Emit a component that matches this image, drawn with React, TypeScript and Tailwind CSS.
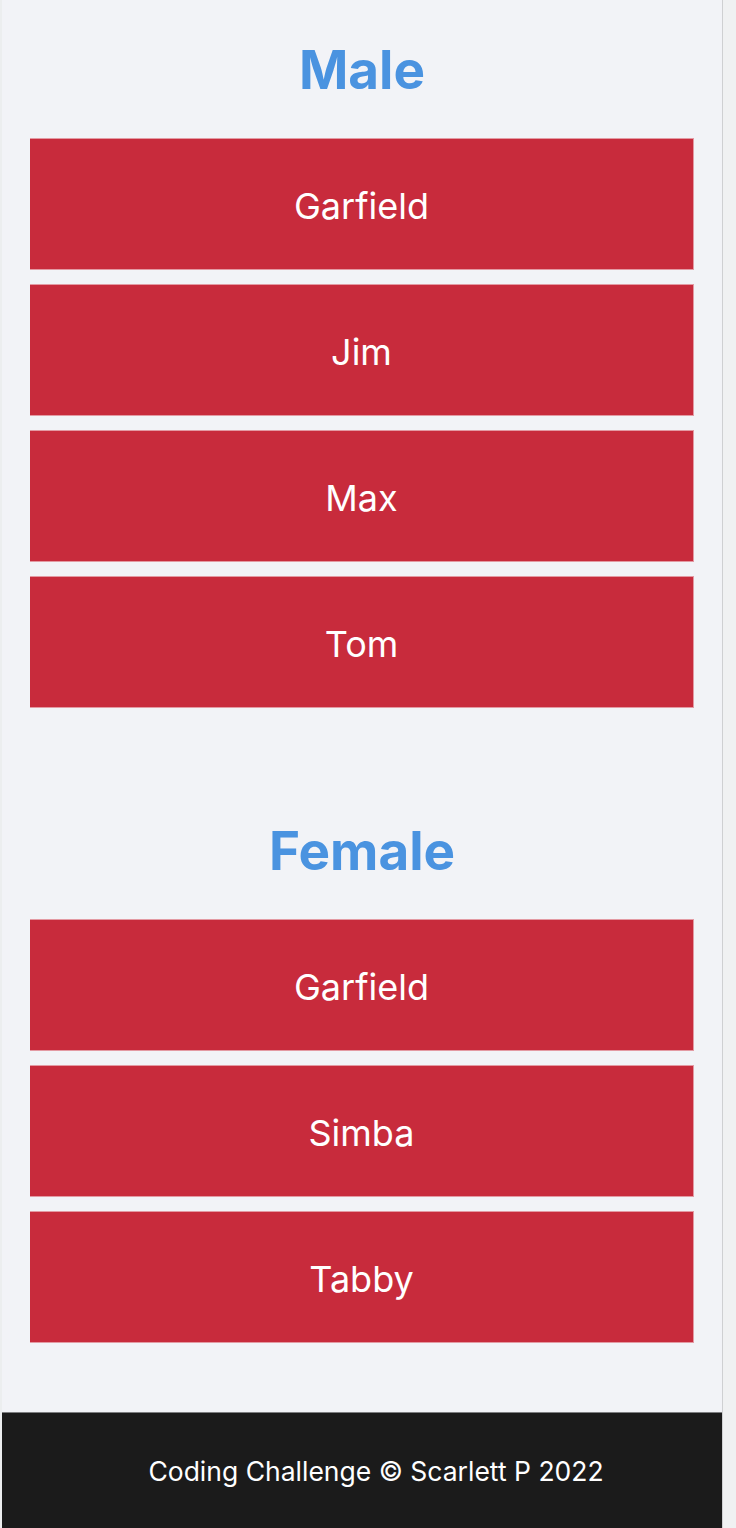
import React from 'react';

const male = ['Garfield', 'Jim', 'Max', 'Tom'];
const female = ['Garfield', 'Simba', 'Tabby'];

const PetCard: React.FC<{ name: string }> = ({ name }) => (
    <div className="h-[132px] pt-[4px] flex items-center justify-center bg-[#c82b3c] border-r border-t border-b border-[#e39aa3] text-white text-[36px]">
        {name}
    </div>
);

const Section: React.FC<{ title: string; pets: string[]; className?: string }> = ({ title, pets, className }) => (
    <section className={className}>
        <h2 className="h-[62px] leading-[62px] text-center text-[53px] font-bold text-[#4a93e0] mb-[37px]">{title}</h2>
        <div className="flex flex-col gap-[14px]">
            {pets.map((p, i) => (
                <PetCard key={i} name={p} />
            ))}
        </div>
    </section>
);

const App: React.FC = () => {
    return (
        <div className="min-h-[1528px] flex bg-[#f0f1f2]" style={{ fontFamily: 'Inter, "Noto Sans", sans-serif' }}>
            <div className="w-[2px] bg-[#eceeef]" />
            <div className="w-[721px] flex flex-col bg-[#f2f3f7] border-r border-[#cfd0d2]">
                <main className="flex-1 px-[28px]">
                    {/* Male */}
                    <Section title="Male" pets={male} className="pt-[39px]" />
                    {/* Female */}
                    <Section title="Female" pets={female} className="pt-[112px] pb-[68px]" />
                </main>
                <footer className="h-[116px] bg-[#1b1b1b] border-t border-[#7d7e80] flex items-center justify-center pl-[28px] pt-[2px] text-[26.5px] text-white">
                    Coding Challenge © Scarlett P 2022
                </footer>
            </div>
            <div className="flex-1 bg-[#f0f1f2]" />
        </div>
    );
};

export default App;
